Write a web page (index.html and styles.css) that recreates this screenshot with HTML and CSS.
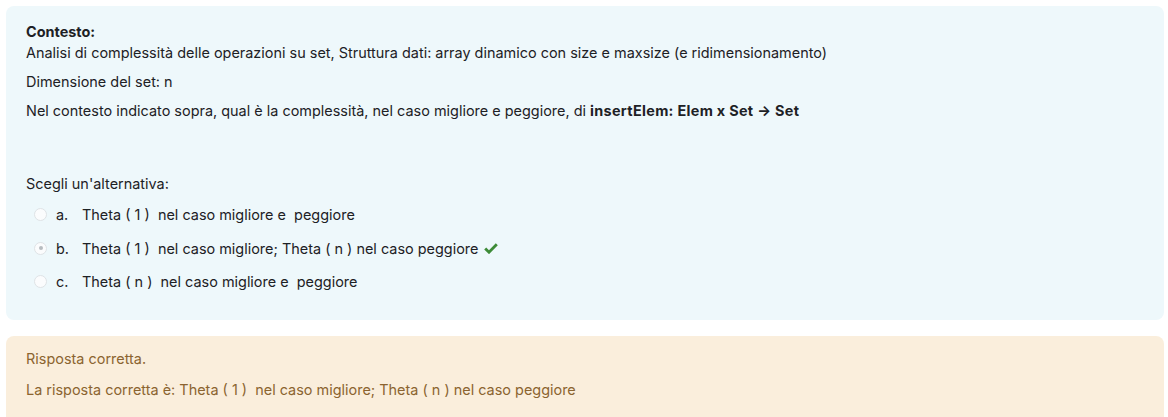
FILE: index.html
```html
<!DOCTYPE html>
<html lang="it">
<head>
<meta charset="utf-8">
<link rel="stylesheet" href="styles.css">
</head>
<body>
<div class="page">
  <div class="formulation">
    <div class="qtext">
      <div class="ctx-title">Contesto:</div>
      <p class="line">Analisi di complessità delle operazioni su set, Struttura dati: array dinamico con size e maxsize (e ridimensionamento)</p>
      <p class="line">Dimensione del set: n</p>
      <p class="line">Nel contesto indicato sopra, qual è la complessità, nel caso migliore e peggiore, di <strong>insertElem: Elem x Set → Set</strong></p>
    </div>
    <div class="ablock">
      <div class="prompt">Scegli un'alternativa:</div>
      <div class="answers">
        <div class="opt"><span class="radio"></span><span class="letter">a.</span><span class="otext">Theta ( 1 )&nbsp; nel caso migliore e&nbsp; peggiore</span></div>
        <div class="opt"><span class="radio checked"></span><span class="letter">b.</span><span class="otext">Theta ( 1 )&nbsp; nel caso migliore; Theta ( n ) nel caso peggiore</span>
          <svg class="tick" viewBox="0 0 14 12" width="14" height="12"><path d="M1.2 6.4 L5 10.2 L12.8 2.2" fill="none" stroke="#3d8b37" stroke-width="2.8" stroke-linejoin="miter"/></svg>
        </div>
        <div class="opt"><span class="radio"></span><span class="letter">c.</span><span class="otext">Theta ( n )&nbsp; nel caso migliore e&nbsp; peggiore</span></div>
      </div>
    </div>
  </div>
  <div class="outcome">
    <p class="fb">Risposta corretta.</p>
    <p class="fb">La risposta corretta è: Theta ( 1 )&nbsp; nel caso migliore; Theta ( n ) nel caso peggiore</p>
  </div>
</div>
</body>
</html>
```
FILE: styles.css
```css
html, body {
  margin: 0;
  padding: 0;
  background: #ffffff;
}
body {
  font-family: Inter, "Noto Sans", sans-serif;
  font-size: 14.45px;
  line-height: 21px;
  color: #1d2125;
}
.page {
  padding: 6px 4px 0 6px;
}
.formulation {
  background: #eef8fb;
  border-radius: 8px;
  padding: 15px 20px 28px 20px;
  margin-bottom: 16px;
}
.ctx-title {
  font-weight: 700;
}
.line {
  margin: 0 0 8px 0;
}
.line strong {
  letter-spacing: 0.3px;
}
.qtext {
  margin-bottom: 52px;
}
.prompt {
  margin-bottom: 10px;
}
.answers {
  display: flex;
  flex-direction: column;
  gap: 12.5px;
  padding-left: 8px;
}
.opt {
  display: flex;
  align-items: center;
}
.radio {
  width: 11px;
  height: 11px;
  border: 1px solid #dfe3e6;
  border-radius: 50%;
  background: #fbfcfd;
  margin-right: 9px;
  position: relative;
  flex: none;
}
.radio.checked::after {
  content: "";
  position: absolute;
  left: 3.5px;
  top: 3.5px;
  width: 4px;
  height: 4px;
  border-radius: 50%;
  background: #b7bcc0;
}
.letter {
  width: 26px;
}
.tick {
  margin-left: 6px;
}
.outcome {
  background: #faeedc;
  border-radius: 8px;
  padding: 12px 20px 20px 20px;
  color: #8b6430;
}
.fb {
  margin: 0 0 10px 0;
}
```
